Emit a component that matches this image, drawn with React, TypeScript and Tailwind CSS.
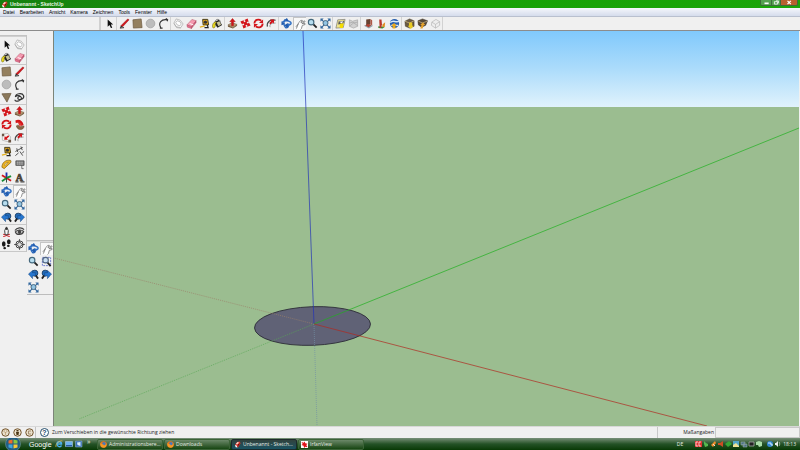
import type { ReactNode } from "react"
import clsx from "clsx"

const red = "#d3151b"
const blue = "#2f6fc4"

const arrow4 = "M12 0l5 6-3 1v3l3 0 1-3 6 5-6 5-1-3-3 0v3l3 1-5 6-5-6 3-1v-3l-3 0-1 3-6-5 6-5 1 3 3 0v-3l-3-1z"

const icons: Record<string, ReactNode> = {
    Auswählen: <path d="M8 3v16l4-4 3 7 3-1-3-7h5z" fill="#111" />,
    Komponente: (
        <g fill="#fafafa" stroke="#a5a5a5" strokeWidth="1.500">
            <path d="M7 2l9 3 6 8-5 8-10-2-5-8z" />
            <path d="M9 6l6 2 3 5-3 4-6-2-3-5z" fill="#fff" />
            <path d="M2 12l6 9 9 1" fill="none" />
        </g>
    ),
    Farbeimer: (
        <g>
            <path d="M4 10L15 4l7 11-10 6z" fill="#222" />
            <path d="M7 9c0-8 11-8 11 0" fill="none" stroke="#555" strokeWidth="1.500" />
            <path d="M10 10l6-3 4 7-6 4z" fill="#c8c39a" />
            <path d="M1 18c0-6 4-11 9-9l-3 4c1 3 0 8-3 9-2 0-3-2-3-4z" fill="#e8d61e" stroke="#544c10" />
        </g>
    ),
    Radierer: (
        <g stroke="#b04c66">
            <path d="M2 15L13 3l9 3-10 13z" fill="#f59ab0" />
            <path d="M2 15l10 4v4l-9-3z" fill="#e66f8c" />
            <path d="M12 19L22 6v4L12 23z" fill="#c95673" />
            <path d="M8 12l8 3" stroke="#fff" strokeWidth="2" />
        </g>
    ),
    Rechteck: <path d="M2 4l18-2 2 19-19 1z" fill="#94805f" stroke="#6d5b40" strokeWidth="1.500" />,
    Linie: (
        <g>
            <path d="M4 17L19 2l3 2L8 19z" fill="#d3151b" stroke="#8c1013" />
            <path d="M4 17l4 2-6 3z" fill="#222" />
            <path d="M2 22l9-1" stroke="#222" strokeWidth="2" />
        </g>
    ),
    Kreis: <circle cx="12" cy="12" r="9.500" fill="#bcbcbc" stroke="#9c9c9c" strokeWidth="1.500" />,
    Bogen: <path d="M6 21C0 11 7 2 20 4M17 1l4 3-1 3M4 22h6" fill="none" stroke="#333" strokeWidth="2.500" />,
    Polygon: <path d="M2 4l20-1-9 19z" fill="#8b785a" stroke="#66553b" strokeWidth="1.500" />,
    Freihand: <path d="M3 11C3 3 18 1 21 8c2 7-7 10-11 8s0-8 4-6 2 7-3 9-9 1-9-2M3 11c2-4 9-4 11-1" fill="none" stroke="#333" strokeWidth="2.500" />,
    "Drücken/Ziehen": (
        <g>
            <path d="M2 15l9-5 11 4-9 7z" fill="#b69a72" stroke="#665036" />
            <path d="M2 15v4l11 4 9-6v-3l-9 7z" fill="#765b3d" />
            <path d="M12 1l6 7h-4v9h-4V8H6z" fill={red} stroke="#a81014" />
        </g>
    ),
    Verschieben: <path d={arrow4} fill={red} transform="rotate(22 12 12)" />,
    Drehen: (
        <g fill="none" stroke={red} strokeWidth="4">
            <path d="M3 12C3 4 12 1 18 6M21 12c0 8-9 11-15 6" />
            <path d="M22 3v8h-9zM2 21v-8h9z" fill={red} stroke="none" />
        </g>
    ),
    "Folge mir": (
        <g>
            <path d="M3 3c9-4 16 1 18 10l-5 2C14 9 10 7 4 9z" fill={red} />
            <path d="M5 15c3-3 7-1 8 2l9-2c0 6-4 8-9 8-4 0-7-4-8-8z" fill="#8b6746" stroke="#5a3c22" />
            <path d="M7 5l6 12 4-6z" fill="#e23630" />
        </g>
    ),
    Skalieren: (
        <g>
            <path d="M3 5l12-2 6 8-2 11-16-4z" fill="#f3f3f3" stroke="#888" />
            <path d="M2 4h5v5H2zM16 17h6v6h-6z" fill="#6c5545" />
            <path d="M7 17l1-8 3 2 5-4 2 3-5 4 2 3z" fill={red} />
        </g>
    ),
    Versatz: (
        <g fill="none">
            <path d="M3 19C1 9 9 2 21 5" stroke="#444" strokeWidth="2.500" />
            <path d="M9 20c-2-6 2-9 12-9" stroke="#777" strokeWidth="1.500" />
            <path d="M9 3h9l-1 9-3-2-4 4-3-3 4-4z" fill={red} />
        </g>
    ),
    Maßband: (
        <g>
            <path d="M8 3h11l2 12H9z" fill="#e5a81b" stroke="#3b310f" strokeWidth="2" />
            <circle cx="14" cy="9" r="3.500" fill="#333" />
            <path d="M18 15l2 6H12" fill="none" stroke="#222" strokeWidth="2.500" />
            <path d="M2 20l11-3" stroke="#e5b321" strokeWidth="3" />
        </g>
    ),
    Abmessungen: <path d="M3 12L19 3M6 5l2 8M15 1l3 8M13 12l6 9M3 21l7-6M18 15l4-3" fill="none" stroke="#444" strokeWidth="2" />,
    Winkelmesser: (
        <g>
            <path d="M2 18C2 8 10 1 21 3l1 4L7 21z" fill="#edb323" stroke="#84600d" strokeWidth="1.500" />
            <path d="M8 14c1-4 4-6 8-7l-7 8z" fill="#f7f0d8" stroke="#84600d" />
        </g>
    ),
    Text: (
        <g stroke="#444">
            <path d="M4 4h18v10H4z" fill="#777" strokeWidth="1.500" />
            <path d="M6 7h14M6 11h14" stroke="#ddd" strokeDasharray="3 1" strokeWidth="1.500" />
            <path d="M17 14v7h4" fill="none" strokeWidth="1.500" />
        </g>
    ),
    Achsen: (
        <g fill="none" strokeWidth="4">
            <path d="M12 13V1" stroke="#1e2ca9" />
            <path d="M12 13l10 6M12 13L2 7" stroke={red} />
            <path d="M12 13L2 20M12 13l10-4" stroke="#188b35" />
            <path d="M12 12v11" stroke="#243" strokeWidth="2" />
        </g>
    ),
    "3D-Text": (
        <g>
            <path d="M3 20h7v3H3zM14 20h9v3h-9z" fill="#444" />
            <text x="4" y="20" fontFamily="Liberation Serif, serif" fontWeight="bold" fontSize="22" fill="#4b4236" stroke="#4b4236" strokeWidth="1.500">A</text>
        </g>
    ),
    Rotieren: (
        <g fill="none" stroke={blue} strokeWidth="3">
            <path d="M3 9c5-4 13-4 18 0 3 4-2 7-8 7" />
            <path d="M9 3c-4 6-3 13 1 18 4 2 7-3 7-9" />
            <path d="M7 5l6-5 4 7zM1 7v9l8-3zM15 11v10l-8-5z" fill="#225cae" stroke="none" />
            <path d="M9 21l8-1-3-6z" fill="#225cae" stroke="none" />
        </g>
    ),
    Hand: (
        <path d="M3 21L8 8l5-5 3 0-3 5 8-4 1 2-7 4 7 0v2l-6 2-2 7-2 2M7 11l-5 6" fill="#fff" stroke="#777" strokeWidth="1.800" />
    ),
    Zoom: (
        <g>
            <path d="M13 13l8 8" stroke="#222" strokeWidth="4" />
            <circle cx="9" cy="9" r="6" fill="#b7ddef" stroke="#44687d" strokeWidth="2.500" />
        </g>
    ),
    Zoomfenster: (
        <g>
            <path d="M3 3h18v18H3z" fill="none" stroke="#6272cb" strokeDasharray="4 2" strokeWidth="2" />
            <path d="M13 13l8 9" stroke="#222" strokeWidth="4" />
            <circle cx="10" cy="9" r="6" fill="#cadff2" stroke="#526784" strokeWidth="2.500" />
        </g>
    ),
    "Alles zoomen": (
        <g>
            <path d="M3 3l18 18M21 3L3 21" stroke="#30669d" strokeWidth="2.500" />
            <path d="M1 1h7L1 8zM23 1v7l-7-7zM1 23v-7l7 7zM23 23h-7l7-7z" fill="#30669d" />
            <circle cx="12" cy="11" r="5.500" fill="#92c4e4" stroke="#41627b" strokeWidth="2" />
        </g>
    ),
    Zurück: (
        <g>
            <circle cx="15" cy="9" r="6.500" fill="#246cb9" stroke="#183d68" strokeWidth="2" />
            <path d="M17 14l5 7" stroke="#222" strokeWidth="4" />
            <path d="M1 11l9-8v5h6v7h-6v6z" fill="#2676cf" stroke="#123d75" />
        </g>
    ),
    Vor: (
        <g>
            <circle cx="9" cy="9" r="6.500" fill="#246cb9" stroke="#183d68" strokeWidth="2" />
            <path d="M7 14l-5 7" stroke="#222" strokeWidth="4" />
            <path d="M23 11l-9-8v5H8v7h6v6z" fill="#2676cf" stroke="#123d75" />
        </g>
    ),
    "Kamera positionieren": (
        <g>
            <path d="M5 18l14 5M19 18L5 23" stroke={red} strokeWidth="2.500" />
            <path d="M9 19L8 10l4-8 4 8-1 9z" fill="#f7f7f7" stroke="#333" strokeWidth="2" />
            <circle cx="12" cy="6" r="2.500" fill="#333" />
        </g>
    ),
    Umsehen: (
        <g fill="none" stroke="#444" strokeWidth="2.500">
            <path d="M2 10c4-7 15-8 20-2M3 13c4-5 13-6 18-1-3 8-15 9-18 1z" />
            <circle cx="12" cy="13" r="3" fill="#444" />
        </g>
    ),
    Gehen: (
        <g fill="#191919">
            <ellipse cx="6" cy="11" rx="4" ry="6" />
            <ellipse cx="8" cy="20" rx="3" ry="2.500" />
            <ellipse cx="17" cy="6" rx="4" ry="5.500" />
            <ellipse cx="16" cy="15" rx="3" ry="2.500" />
        </g>
    ),
    Schnittebene: (
        <g fill="none" stroke="#333" strokeWidth="2">
            <circle cx="12" cy="12" r="8" />
            <path d="M12 0v24M0 12h24" strokeWidth="1.500" />
            <path d="M12 6l6 6-6 6-6-6z" fill="#ddd" />
        </g>
    ),
    Standort: (
        <g>
            <path d="M6 4l16-1-4 18-16 1z" fill="#f0e58d" stroke="#777" strokeWidth="1.500" />
            <path d="M8 7l12-1-2 6-11 2z" fill="#555" />
            <path d="M9 8l9-1-3 5z" fill="#fafafa" />
            <path d="M11 12h8l-2 10h-7z" fill="#f4dd00" />
        </g>
    ),
    Gelände: (
        <g fill="#d0d0d0" stroke="#a5a5a5" strokeWidth="1.500">
            <path d="M3 4l7 3 11-3v14l-9 4-9-4z" />
            <path d="M3 11l8-2 10 8M3 18l9-7 9-2" fill="none" />
        </g>
    ),
    "Modell platzieren": (
        <g>
            <path d="M2 17l9-4 11 4-9 6z" fill="#92a1aa" />
            <path d="M7 3l9-1v12l-9 2z" fill="#674130" />
            <path d="M16 2l4 3v11l-4-2z" fill="#ad5948" />
            <path d="M5 16l6-3 7 3-6 4z" fill="#b04030" />
        </g>
    ),
    Figur: (
        <g>
            <path d="M5 18l15 1-6 4-9-1z" fill="#358c38" />
            <path d="M7 3h5l1 11-2 8H8z" fill="#b9392d" />
            <path d="M14 14l6-5-1 10-5 1z" fill="#df8e21" />
        </g>
    ),
    "Google Earth": (
        <g>
            <circle cx="12" cy="12" r="10" fill="#285fae" />
            <path d="M3 10c7-8 11 2 19-3M5 17c5-5 10 1 15-1" fill="none" stroke="#d6e8fa" strokeWidth="3" />
            <path d="M11 11l6 6h-3v6H8v-6H5z" fill="#eba819" />
        </g>
    ),
    "Modelle laden": (
        <g>
            <path d="M2 7l10-5 10 4v12l-10 4-9-4z" fill="#695942" stroke="#33291c" />
            <path d="M2 7l10 4 10-5" fill="none" stroke="#bba77a" strokeWidth="2" />
            <path d="M11 10h7v7h3l-6 7-7-7h3z" fill="#e9cb24" />
        </g>
    ),
    "Modell freigeben": (
        <g>
            <path d="M2 6l10-4 11 4-4 10-9 4-7-5z" fill="#554838" stroke="#2f261c" />
            <path d="M3 7l9 4 10-4" fill="none" stroke="#b4a077" strokeWidth="2" />
            <path d="M13 9l5 6h-3l-3 8H7l3-8H7z" fill="#e4a12b" />
        </g>
    ),
    "Komponente freigeben": (
        <g fill="#eee" stroke="#b5b5b5" strokeWidth="1.500">
            <path d="M4 9l9-6 8 5v8l-9 6-9-6z" />
            <path d="M4 9l8 5 9-6M12 14v8" fill="none" />
        </g>
    ),
}

const topGroups = [
    ["Auswählen"],
    ["Linie", "Rechteck", "Kreis", "Bogen"],
    ["Komponente", "Radierer", "Maßband", "Farbeimer"],
    ["Drücken/Ziehen", "Verschieben", "Drehen", "Versatz"],
    ["Rotieren", "Hand", "Zoom", "Alles zoomen"],
    ["Standort", "Gelände"],
    ["Modell platzieren", "Figur", "Google Earth"],
    ["Modelle laden", "Modell freigeben", "Komponente freigeben"],
]

const sideGroups = [
    ["Auswählen", "Komponente", "Farbeimer", "Radierer"],
    ["Rechteck", "Linie", "Kreis", "Bogen", "Polygon", "Freihand"],
    ["Verschieben", "Drücken/Ziehen", "Drehen", "Folge mir", "Skalieren", "Versatz"],
    ["Maßband", "Abmessungen", "Winkelmesser", "Text", "Achsen", "3D-Text"],
    ["Rotieren", "Hand", "Zoom", "Alles zoomen", "Zurück", "Vor"],
    ["Kamera positionieren", "Umsehen", "Gehen", "Schnittebene"],
]

const cameraTools = ["Rotieren", "Hand", "Zoom", "Zoomfenster", "Zurück", "Vor", "Alles zoomen"]

const menus = ["Datei", "Bearbeiten", "Ansicht", "Kamera", "Zeichnen", "Tools", "Fenster", "Hilfe"]

function Tool({ name }: { name: string }) {
    return (
        <button
            type="button"
            aria-label={name}
            className={clsx(
                "flex size-[13px] shrink-0 items-center justify-center",
                name === "Hand" && "border-l border-t border-[#c5c5c5] bg-[#f8f8f8]"
            )}
        >
            <svg viewBox="0 0 24 24" className="size-[11px] shrink-0">{icons[name]}</svg>
        </button>
    )
}

function AppLogo() {
    return (
        <svg viewBox="0 0 16 16" className="size-[7px] shrink-0">
            <path d="M2 9l5-7 6-1 2 4-6 10z" fill="#d9352c" />
            <path d="M2 9l4 1 2 5-4-1z" fill="#fff" />
            <path d="M9 7l5-2-6 9z" fill="#7e100d" />
            <path d="M8 2l4 2-5 4-3-1z" fill="#f6d8cc" />
        </svg>
    )
}

function TitleBar() {
    return (
        <header className="flex h-2 items-center gap-[2px] bg-linear-to-r from-[#14800f] via-[#16a006] to-[#1aa609] pl-px">
            <AppLogo />
            <h1 className="flex-1 text-[5px] leading-none font-bold text-[#e4f5e2]">Unbenannt - SketchUp</h1>
            <div className="mr-[2px] flex h-[6px] self-start overflow-hidden rounded-b-xs border border-t-0 border-[#3d6b3b]">
                <button type="button" aria-label="Minimieren" className="flex w-[10px] items-center justify-center bg-[#56a052]">
                    <svg viewBox="0 0 10 6" className="h-[5px]"><path d="M3 4h5" stroke="#fff" strokeWidth="2" /></svg>
                </button>
                <button type="button" aria-label="Wiederherstellen" className="flex w-[10px] items-center justify-center border-x border-[#3d6b3b] bg-[#56a052]">
                    <svg viewBox="0 0 10 6" className="h-[5px]"><path d="M3 2h4v3H3zM5 1h3v3" fill="none" stroke="#fff" /></svg>
                </button>
                <button type="button" aria-label="Schließen" className="flex w-4 items-center justify-center bg-[#b8602f]">
                    <svg viewBox="0 0 10 6" className="h-[5px]"><path d="M3 1l4 4M7 1L3 5" stroke="#fff" strokeWidth="1.500" /></svg>
                </button>
            </div>
        </header>
    )
}

function Canvas() {
    return (
        <main className="relative mr-px min-w-0 flex-1 border-l border-[#7c8479] bg-[#9bbd90]">
            <svg viewBox="54 31 745 395" preserveAspectRatio="none" className="absolute inset-0 size-full">
                <defs>
                    <linearGradient id="sky" x1="0" y1="0" x2="0" y2="1">
                        <stop offset="0" stopColor="#80c9fc" />
                        <stop offset="0.500" stopColor="#acdcfb" />
                        <stop offset="1" stopColor="#e0f2fc" />
                    </linearGradient>
                </defs>
                <path d="M54 31h745v76H54z" fill="url(#sky)" />
                <ellipse cx="312.500" cy="326" rx="58" ry="19.300" transform="rotate(-2 312.500 326)" fill="#606276" stroke="#2d2d38" strokeWidth="0.900" />
                <g fill="none" strokeWidth="0.700">
                    <path d="M314 324L54 258" stroke="#9b7f69" strokeDasharray="1 1" />
                    <path d="M314 324L79 419" stroke="#57a755" strokeDasharray="1 1" />
                    <path d="M314 324l3 102" stroke="#7390a5" strokeDasharray="1 1" />
                    <path d="M314 324L303 31" stroke="#2433b8" />
                    <path d="M314 324L799 128" stroke="#20b020" />
                    <path d="M314 324l393 102" stroke="#b02a21" />
                </g>
            </svg>
        </main>
    )
}

function StatusBar() {
    return (
        <footer className="flex h-3 items-center border-t border-[#d8d8d8] bg-[#f0f0f0] text-[5px] leading-none">
            <div className="flex h-full items-center gap-[3px] border-r border-[#c4c4c4] px-px">
                {["Standort", "Urheber", "Anmelden"].map((label, i) => (
                    <button key={label} type="button" aria-label={label}>
                        <svg viewBox="0 0 18 18" className="size-[9px]">
                            <circle cx="9" cy="9" r="7.500" fill="#e9dfcb" stroke="#72532d" strokeWidth="2" />
                            {i === 0 && <path d="M9 14V8M6 6c0-4 6-4 6 0s-6 4-6 0z" stroke="#b79a70" strokeWidth="1.500" fill="none" />}
                            {i === 1 && <path d="M7 4h4v3H7zM6 8h6l-1 6H7z" fill="#4a3415" />}
                            {i === 2 && <path d="M12 6H7v6h5" stroke="#a58e70" strokeWidth="2" fill="none" />}
                        </svg>
                    </button>
                ))}
            </div>
            <button type="button" aria-label="Hilfe" className="ml-1 flex size-[9px] items-center justify-center rounded-full border border-[#27506e] bg-white text-[7px] font-bold text-[#1d496a]">?</button>
            <p className="ml-[3px] flex-1 font-['Open_Sans',sans-serif] text-[#222]">Zum Verschieben in die gewünschte Richtung ziehen</p>
            <label htmlFor="measure" className="flex h-full w-[58px] items-center justify-end border-l border-[#c8c8c8] pr-px font-['Open_Sans',sans-serif] text-[#222]">Maßangaben</label>
            <input id="measure" className="h-full w-[85px] border border-[#c9c9c9] bg-[#f0f0f0]" />
        </footer>
    )
}

function Firefox() {
    return (
        <svg viewBox="0 0 16 16" className="size-[7px] shrink-0">
            <circle cx="8" cy="8" r="7.500" fill="#e9731c" />
            <circle cx="9" cy="6" r="4" fill="#4978bd" />
            <path d="M1 4c3 5 6 2 8 6 3 0 5-2 5-6 3 8-2 12-7 11S0 10 1 4z" fill="#f39a25" />
        </svg>
    )
}

function Irfan() {
    return (
        <svg viewBox="0 0 16 16" className="size-[7px] shrink-0">
            <path d="M0 0h16v16H0z" fill="#fff" />
            <path d="M1 2l5 2 2-3 2 4 5 1-3 3 3 5-5-1-3 3-1-5-5-2 3-2z" fill="#e0131a" />
        </svg>
    )
}

const tasks = [
    { title: "Administrationsbere...", icon: <Firefox /> },
    { title: "Downloads", icon: <Firefox /> },
    { title: "Unbenannt - Sketch...", icon: <AppLogo />, active: true },
    { title: "IrfanView", icon: <Irfan /> },
]

function TrayIcons() {
    return (
        <svg viewBox="0 0 86 8" className="h-2 w-[86px] shrink-0">
            <path d="M0 1h7v6H0z" fill="#df3030" />
            <path d="M3 2H1v4h2M6 2H4v4h2" fill="none" stroke="#fff" strokeWidth="0.700" />
            <path d="M9 1l2 2 2 1v2l-3 1-1-3z" fill="#55ba50" />
            <path d="M16 5l4-4 1 2-3 4z" fill="#f08c2b" />
            <path d="M18 4l2 2" stroke="#ddd" />
            <path d="M23 3h2l3-2v6l-3-2h-2z" fill="#cc4d24" />
            <path d="M30 4l4-3 3 3-4 3z" fill="#35a735" />
            <path d="M38 1h6v6h-6z" fill="#53a6c9" />
            <path d="M38 5l3-2 3 3v1h-6z" fill="#eee296" />
            <path d="M46 2h4v3h-4zM48 4h4v3h-4z" fill="#4c7186" stroke="#a9b8ad" strokeWidth="0.500" />
            <path d="M54 2h5v4h-5z" fill="#222" stroke="#b4b4b4" strokeWidth="0.700" />
            <path d="M61 2l3-1 3 1v4l-3 1-1-2h-2z" fill="#a9dca7" />
            <circle cx="75" cy="4" r="3" fill="#3286cf" />
            <path d="M73 3h3v2h2" fill="none" stroke="#d9efff" />
            <path d="M80 3h1l2-2v6l-2-2h-1z" fill="#eee" />
            <path d="M84 2c1 1 1 3 0 4" fill="none" stroke="#ccc" strokeWidth="0.700" />
        </svg>
    )
}

function TaskBar() {
    return (
        <nav className="flex h-3 items-center bg-linear-to-b from-[#789079] via-[#245226] to-[#073904] font-['Open_Sans',sans-serif] text-[5px] leading-none text-[#e6eee5]">
            <button type="button" aria-label="Start" className="ml-[5px]">
                <svg viewBox="0 0 32 24" className="h-3 w-4">
                    <circle cx="16" cy="12" r="15" fill="#225d83" stroke="#7fa3a4" />
                    <path d="M7 5l8-2v8H7z" fill="#ee6a2b" />
                    <path d="M17 3l8 2v6h-8z" fill="#8cc63f" />
                    <path d="M7 13h8v8l-8-2z" fill="#42a5dc" />
                    <path d="M17 13h8v6l-8 2z" fill="#fac835" />
                </svg>
            </button>
            <a href="#google" className="ml-2 w-[22px] font-['Liberation_Sans',sans-serif] text-[7px] text-white">Google</a>
            <div className="ml-1 flex gap-[2px]">
                <a href="#ie" aria-label="Internet Explorer">
                    <svg viewBox="0 0 16 16" className="size-2">
                        <path d="M13 11c-2 4-9 3-9-3s9-6 9 0H5" fill="none" stroke="#4aaef0" strokeWidth="3" />
                        <path d="M2 14C0 8 9 0 15 2" fill="none" stroke="#e9bf47" strokeWidth="1.500" />
                    </svg>
                </a>
                <a href="#desktop" aria-label="Desktop">
                    <svg viewBox="0 0 16 16" className="size-2">
                        <path d="M1 3h14v10H1z" fill="#6eb2ef" stroke="#c2d8eb" />
                        <path d="M2 10h12v3H2z" fill="#295b9e" />
                    </svg>
                </a>
                <a href="#switch" aria-label="Fenster wechseln">
                    <svg viewBox="0 0 16 16" className="size-2">
                        <path d="M1 2h13v12H1z" fill="#3770b9" stroke="#9db6ce" />
                        <path d="M4 5l7-1v8l-6-2z" fill="#d8edf9" />
                    </svg>
                </a>
            </div>
            <span className="ml-1 w-[10px] self-start text-[7px] leading-none">»</span>
            <div className="flex gap-px">
                {tasks.map((task) => (
                    <button
                        key={task.title}
                        type="button"
                        className={clsx(
                            "flex h-[11px] w-[66px] items-center gap-[2px] rounded-xs border px-[2px] whitespace-nowrap",
                            task.active ? "border-[#1c2b2b] bg-linear-to-b from-[#30423d] to-[#175363]" : "border-[#3b6337] bg-linear-to-b from-[#6b8869] to-[#164611]"
                        )}
                    >
                        {task.icon}
                        {task.title}
                    </button>
                ))}
            </div>
            <span className="mr-3 ml-auto">DE</span>
            <TrayIcons />
            <time className="mr-1 ml-[2px]">18:13</time>
        </nav>
    )
}

function App() {
    return (
        <div className="flex h-screen flex-col overflow-hidden bg-[#f0f0f0] font-['Liberation_Sans',Arial,sans-serif] text-black">
            <TitleBar />
            <nav className="flex h-[9px] shrink-0 items-center gap-[5px] border-b border-[#b9c0cf] bg-linear-to-b from-[#f5f7fc] to-[#d5dcec] pl-[3px] text-[5px] leading-none">
                {menus.map((menu) => (
                    <button key={menu} type="button">{menu}</button>
                ))}
            </nav>
            <div className="flex h-[14px] shrink-0 border-b border-[#8c8c8c] pl-[99px]">
                <div className="mr-px w-[2px] border-x border-[#d0d0d0]" />
                {topGroups.map((group) => (
                    <div key={group[0]} className="flex border-r border-[#d2d2d2] pl-px">
                        {group.map((name) => <Tool key={name} name={name} />)}
                    </div>
                ))}
            </div>
            <div className="flex min-h-0 flex-1">
                <aside className="flex shrink-0 items-start">
                    <div className="mt-1 w-[27px] border-t border-r border-[#c3c3c3]">
                        <div className="mb-px h-px bg-[#d0d0d0]" />
                        {sideGroups.map((group) => (
                            <div key={group.join()} className="grid grid-cols-2 border-b border-[#c8c8c8]">
                                {group.map((name) => <Tool key={name} name={name} />)}
                            </div>
                        ))}
                    </div>
                    <div className="mt-[209px] w-[26px] border-y border-[#bdbdbd]">
                        <div className="h-px bg-[#dcdcdc]" />
                        <div className="grid grid-cols-2">
                            {cameraTools.map((name) => <Tool key={name} name={name} />)}
                        </div>
                    </div>
                </aside>
                <Canvas />
            </div>
            <StatusBar />
            <TaskBar />
        </div>
    )
}

export default App
